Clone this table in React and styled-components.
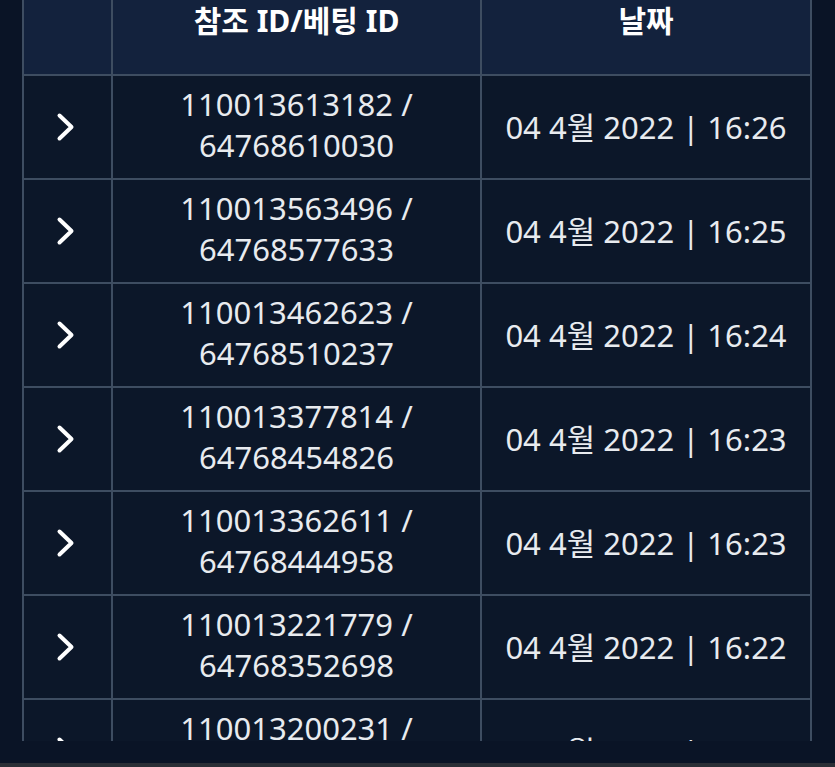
import React from "react";
import styled, { createGlobalStyle } from "styled-components";

const GlobalStyle = createGlobalStyle`
  html, body {
    margin: 0;
    padding: 0;
    background: #0a1426;
  }
  * {
    box-sizing: border-box;
  }
`;

const Page = styled.div`
  width: 835px;
  height: 767px;
  display: flex;
  flex-direction: column;
  background: #0a1426;
  font-family: "Noto Sans", "Noto Sans CJK KR", sans-serif;
  overflow: hidden;
`;

const ScrollArea = styled.div`
  height: 741px;
  overflow: hidden;
  padding: 0 23px 0 22px;
`;

const Table = styled.div`
  display: grid;
  grid-template-columns: 87px 367px 328px;
  gap: 2px;
  padding: 0 2px 2px 2px;
  background: #3e4d61;
`;

const HeadCell = styled.div`
  height: 74px;
  background: #13223d;
  color: #ffffff;
  font-weight: 700;
  font-size: 30px;
  line-height: 42px;
  text-align: center;
`;

const Cell = styled.div`
  height: 102px;
  background: #0c1729;
  color: #e8ebef;
  font-size: 31px;
  line-height: 41px;
  display: flex;
  align-items: center;
  justify-content: center;
  text-align: center;
  padding-bottom: ${(p) => (p.$shift ? "4px" : "0")};
  padding-right: ${(p) => (p.$icon ? "3px" : "0")};
`;

const Footer = styled.div`
  flex: 1;
  display: flex;
  flex-direction: column;
  justify-content: flex-end;
`;

const FooterLine = styled.div`
  height: 4px;
  background: #2b2f36;
`;

const Chevron = () => (
  <svg width="22" height="30" viewBox="0 0 22 30">
    <polyline
      points="4.5,3.5 16.5,15 4.5,26.5"
      fill="none"
      stroke="#ffffff"
      strokeWidth="4"
      strokeLinecap="round"
      strokeLinejoin="round"
    />
  </svg>
);

const rows = [
  ["110013613182", "64768610030", "16:26"],
  ["110013563496", "64768577633", "16:25"],
  ["110013462623", "64768510237", "16:24"],
  ["110013377814", "64768454826", "16:23"],
  ["110013362611", "64768444958", "16:23"],
  ["110013221779", "64768352698", "16:22"],
  ["110013200231", "64768338816", "16:22"],
];

const App = () => {
  return (
    <>
      <GlobalStyle />
      <Page>
        <ScrollArea>
          <Table>
            <HeadCell />
            <HeadCell>참조 ID/베팅 ID</HeadCell>
            <HeadCell>날짜</HeadCell>
            {rows.map(([ref, bet, time]) => (
              <React.Fragment key={ref}>
                <Cell $icon>
                  <Chevron />
                </Cell>
                <Cell $shift>
                  <div>
                    {ref} /
                    <br />
                    {bet}
                  </div>
                </Cell>
                <Cell>04 4월 2022 | {time}</Cell>
              </React.Fragment>
            ))}
          </Table>
        </ScrollArea>
        <Footer>
          <FooterLine />
        </Footer>
      </Page>
    </>
  );
};

export default App;
